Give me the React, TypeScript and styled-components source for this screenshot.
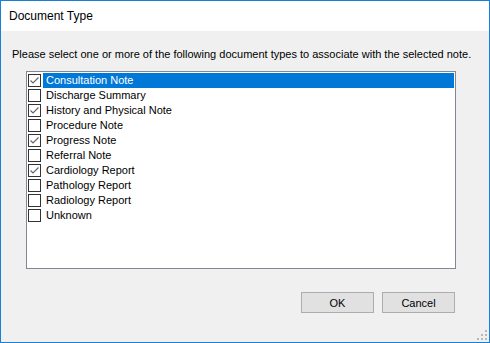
import styled, { createGlobalStyle } from "styled-components";

const GlobalStyle = createGlobalStyle`
  body {
    margin: 0;
    background: #ffffff;
  }
`;

const documentTypes = [
  { label: "Consultation Note", checked: true },
  { label: "Discharge Summary", checked: false },
  { label: "History and Physical Note", checked: true },
  { label: "Procedure Note", checked: false },
  { label: "Progress Note", checked: true },
  { label: "Referral Note", checked: false },
  { label: "Cardiology Report", checked: true },
  { label: "Pathology Report", checked: false },
  { label: "Radiology Report", checked: false },
  { label: "Unknown", checked: false },
];

export default function App() {
  return (
    <>
      <GlobalStyle />
      <DialogWindow>
        <TitleBar>Document Type</TitleBar>
        <DialogBody>
          <Instructions>
            Please select one or more of the following document types to associate with the selected note.
          </Instructions>
          <ListBox>
            {documentTypes.map((item, i) => (
              <ListRow key={item.label}>
                <CheckBox>
                  {item.checked && (
                    <svg width="11" height="11" viewBox="0 0 11 11">
                      <polyline points="1.5,5.5 4,8 9.5,2.5" fill="none" stroke="#666" strokeWidth="1.2" />
                    </svg>
                  )}
                </CheckBox>
                <RowLabel $selected={i === 0}>{item.label}</RowLabel>
              </ListRow>
            ))}
          </ListBox>
          <ButtonRow>
            <DialogButton>OK</DialogButton>
            <DialogButton>Cancel</DialogButton>
          </ButtonRow>
          <SizeGrip width="10" height="10" viewBox="0 0 10 10">
            <rect x="8" y="0" width="2" height="2" fill="#b8b8b8" />
            <rect x="4" y="4" width="2" height="2" fill="#b8b8b8" />
            <rect x="8" y="4" width="2" height="2" fill="#b8b8b8" />
            <rect x="0" y="8" width="2" height="2" fill="#b8b8b8" />
            <rect x="4" y="8" width="2" height="2" fill="#b8b8b8" />
            <rect x="8" y="8" width="2" height="2" fill="#b8b8b8" />
          </SizeGrip>
        </DialogBody>
      </DialogWindow>
    </>
  );
}

const DialogWindow = styled.div`
  width: 490px;
  height: 343px;
  box-sizing: border-box;
  border: 1px solid #1a80d6;
  display: flex;
  flex-direction: column;
  font-family: "Liberation Sans", Arial, sans-serif;
`;

const TitleBar = styled.div`
  height: 30px;
  flex-shrink: 0;
  background: #ffffff;
  padding-left: 8px;
  display: flex;
  align-items: center;
  font-size: 12px;
  color: #000;
`;

const DialogBody = styled.div`
  position: relative;
  flex: 1;
  background: #f0f0f0;
  padding: 16px 33px 0 11px;
`;

const Instructions = styled.div`
  font-size: 11px;
  line-height: 15px;
  color: #000;
  white-space: nowrap;
`;

const ListBox = styled.div`
  margin: 9px 0 0 14px;
  height: 198px;
  box-sizing: border-box;
  border: 1px solid #828790;
  background: #ffffff;
  padding: 1px 1px 0 1px;
`;

const ListRow = styled.div`
  display: flex;
  align-items: center;
  height: 15px;
`;

const CheckBox = styled.div`
  width: 13px;
  height: 13px;
  box-sizing: border-box;
  border: 1px solid #333333;
  background: #ffffff;
  flex-shrink: 0;
  margin-right: 2px;
  display: flex;
  align-items: center;
  justify-content: center;
`;

const RowLabel = styled.div<{ $selected: boolean }>`
  flex: 1;
  height: 15px;
  line-height: 15px;
  padding-left: 3px;
  font-size: 11px;
  color: ${(p) => (p.$selected ? "#ffffff" : "#000000")};
  background: ${(p) => (p.$selected ? "#0078d7" : "transparent")};
`;

const ButtonRow = styled.div`
  display: flex;
  justify-content: flex-end;
  gap: 8px;
  margin-top: 23px;
  padding-right: 1px;
`;

const DialogButton = styled.button`
  width: 73px;
  height: 21px;
  box-sizing: border-box;
  border: 1px solid #adadad;
  background: #e1e1e1;
  font-family: "Liberation Sans", Arial, sans-serif;
  font-size: 11px;
  color: #000;
  padding: 0;
`;

const SizeGrip = styled.svg`
  position: absolute;
  right: 2px;
  bottom: 2px;
`;
